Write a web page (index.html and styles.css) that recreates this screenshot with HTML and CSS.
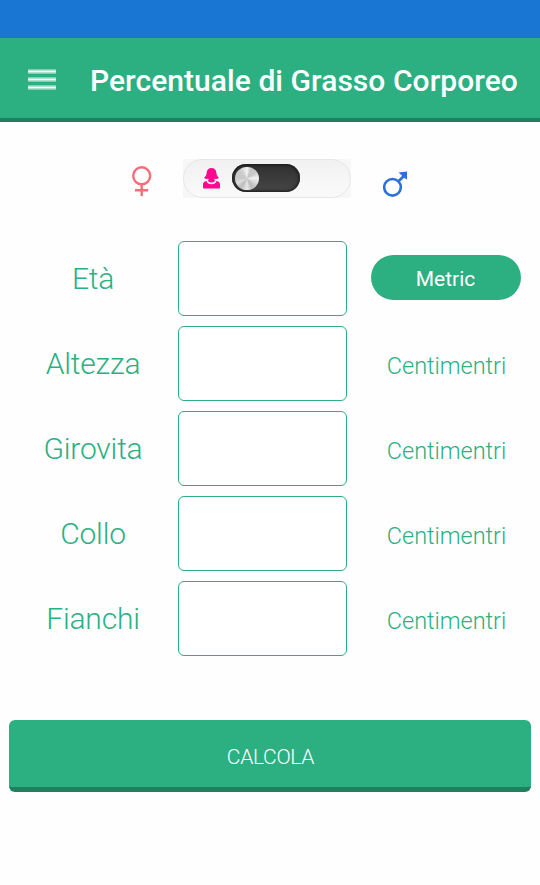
FILE: index.html
```html
<!DOCTYPE html>
<html lang="it">
<head>
<meta charset="utf-8">
<title>Percentuale di Grasso Corporeo</title>
<link rel="stylesheet" href="styles.css">
</head>
<body>
<div class="status"></div>
<header class="bar">
  <svg class="menu" width="28" height="21" viewBox="0 0 28 21">
    <path fill="#fff" fill-opacity=".4" d="M0 0h28v5H0zM0 8h28v5H0zM0 16h28v5H0z"/>
    <path fill="#fff" fill-opacity=".4" d="M0 1h28v3H0zM0 9h28v3H0zM0 17h28v3H0z"/>
    <path fill="#fff" d="M0 2h28v1H0zM0 10h28v1H0zM0 18h28v1H0z"/>
  </svg>
  <h1>Percentuale di Grasso Corporeo</h1>
</header>
<main>
  <div class="gender">
    <svg class="female" width="22" height="32" viewBox="0 0 22 32" fill="none" stroke="#f76c78" stroke-width="2.4">
      <circle cx="10.7" cy="10.8" r="8.5"/><path d="M10.7 19v12M4 25.2h13.2"/>
    </svg>
    <div class="switch">
      <div class="pill">
        <svg class="woman" width="17" height="21" viewBox="0 0 17 21" fill="#ff0890">
          <path d="M8.5 0C5.500 0 4 1.500 3.700 4.500 3.500 7 2.500 8.500 1 10c1.500.9 3 1 4.500.8v1.400l-.8.6c.9 1.200 2.300 1.800 3.800 1.800s2.900-.6 3.800-1.800l-.8-.6v-1.400c1.500.2 3 .1 4.500-.8-1.500-1.500-2.500-3-2.700-5.500C13 1.500 11.500 0 8.500 0z"/>
          <path d="M3.500 13C1 13.500 0 14.500 0 16.500v3c0 .7.400 1 1 1h15c.6 0 1-.3 1-1v-3c0-2-1-3-3.500-3.500-.7 2.300-2.500 3.200-5 3.200s-4.300-.9-5-3.200z"/>
        </svg>
        <div class="track"><div class="knob"></div></div>
      </div>
    </div>
    <svg class="male" width="26" height="27" viewBox="0 0 26 27" fill="none" stroke="#2c70de" stroke-width="2.6">
      <circle cx="9.5" cy="16.3" r="8.3"/><path d="M15.300 10.500l6-6"/><path fill="#2c70de" stroke="none" d="M15.500 1.500l8.500-1v8l-2.700-1.500-4-4z"/>
    </svg>
  </div>
  <form>
    <div class="row"><label for="eta">Età</label><input id="eta"><button type="button" class="metric">Metric</button></div>
    <div class="row"><label for="altezza">Altezza</label><input id="altezza"><span>Centimentri</span></div>
    <div class="row"><label for="girovita">Girovita</label><input id="girovita"><span>Centimentri</span></div>
    <div class="row"><label for="collo">Collo</label><input id="collo"><span>Centimentri</span></div>
    <div class="row"><label for="fianchi">Fianchi</label><input id="fianchi"><span>Centimentri</span></div>
    <button type="button" class="calc">CALCOLA</button>
  </form>
</main>
</body>
</html>
```
FILE: styles.css
```css
* { box-sizing: border-box; }
body { margin: 0; height: 885px; background: #fefefe; font-family: Roboto, sans-serif; overflow: hidden; }
button { border: 0; margin: 0; font-family: inherit; color: #fff; background: #2cb082; }
.status { height: 38px; background: #1976d2; }
.bar { height: 84px; display: flex; align-items: center; padding: 1px 0 0 28px; background: #2cb082; border-bottom: 4px solid #1f805e; }
.menu { display: block; flex: none; margin: 2px 34px 0 0; }
h1 { margin: 4px 0 0; font-size: 30px; font-weight: 500; line-height: 36px; letter-spacing: .05px; color: #fff; white-space: nowrap; }
.gender { height: 119px; padding-left: 131px; display: flex; align-items: flex-start; }
.gender svg { display: block; flex: none; }
.female { margin-top: 43px; }
.switch { width: 168px; height: 39px; margin: 37px 0 0 30px; background: #f7f7f7; }
.pill { width: 168px; height: 39px; display: flex; align-items: flex-start; padding: 4.4px 0 0 19px; border: 1px solid #e6e6e6; border-radius: 20px; background: linear-gradient(#f1f1f1, #fafafa); }
.woman { margin: 3.6px 11.5px 0 0; }
.track { width: 68.5px; height: 28px; padding: 2.5px 3px; border-radius: 14px; background: linear-gradient(#303030, #464646); box-shadow: inset 0 0 3px 1px #161616; }
.knob { width: 24px; height: 23.5px; border-radius: 50%; background: conic-gradient(#f4f4f4, #c4c4c4 25deg, #ccc 60deg, #f2f2f2 85deg, #d0d0d0 125deg, #b8b8b8 150deg, #e8e8e8 180deg, #bcbcbc 215deg, #ddd 245deg, #c8c8c8 275deg, #ccc 320deg, #f4f4f4); }
.male { margin: 49px 0 0 32px; }
form { display: flex; flex-direction: column; gap: 10px; }
.row { height: 75px; display: grid; grid-template-columns: 170px 169px 174px; padding-left: 8px; align-items: center; color: #2cb082; font-weight: 300; }
.row label { text-align: center; font-size: 30px; line-height: 36px; letter-spacing: -.2px; }
.row input { width: 169px; height: 75px; border: 1px solid #2cb082; border-radius: 6px; background: #fff; outline: 0; }
.row span { margin: 4px 0 0 24px; width: 151px; text-align: center; font-size: 23.5px; line-height: 30px; letter-spacing: -.05px; }
.metric { width: 150px; height: 45px; margin: 0 0 2px 24px; padding: 2px 1px 0 0; border-radius: 23px; font-size: 21px; font-weight: 400; }
.calc { height: 72px; margin: 54px 9px 0; padding: 6px 0 0 1px; border-bottom: 5px solid #1f805e; border-radius: 6px; font-size: 21px; font-weight: 300; letter-spacing: -.3px; }
```
